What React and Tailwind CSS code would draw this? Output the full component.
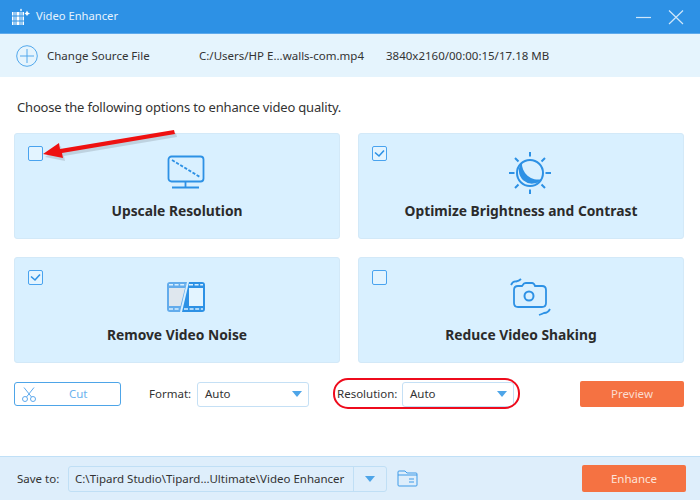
import React from 'react';

function Checkbox({ checked }) {
  return (
    <div className="w-[15px] h-[15px] rounded-[2px] border border-[#49a3ef] bg-[#e3f4ff] flex items-center justify-center">
      {checked && (
        <svg width="11" height="9" viewBox="0 0 11 9" fill="none">
          <path d="M1 3.5 L5 7 L10 1.5" stroke="#2d91e5" strokeWidth="1.6" />
        </svg>
      )}
    </div>
  );
}

function MonitorIcon() {
  return (
    <svg width="38" height="34" viewBox="0 0 38 34" fill="none" stroke="#2d91e5" strokeWidth="1.8">
      <rect x="1.500" y="1.500" width="35" height="25" rx="3" />
      <path d="M5 5 L33 22" strokeDasharray="3.2 1.6" />
      <path d="M18.5 27 V32 M5 32.500 H32" />
    </svg>
  );
}

function SunIcon() {
  return (
    <svg width="44" height="44" viewBox="0 0 44 44" fill="none">
      <circle cx="22" cy="22" r="13" stroke="#2d91e5" strokeWidth="2" fill="#d9f0ff" />
      <path d="M14 11 A13 13 0 1 0 34 28 A16 16 0 0 1 14 11 Z" fill="#2d91e5" />
      <path d="M22 1 V5.5 M22 38.5 V43 M1 22 H6.5 M37.5 22 H43 M7 7 L10.5 10.500 M33.500 33.500 L37 37 M37 7 L33.500 10.500 M10.500 33.500 L7 37" stroke="#2d91e5" strokeWidth="2" />
    </svg>
  );
}

function FilmIcon() {
  return (
    <svg width="40" height="32" viewBox="0 0 40 32" fill="none">
      <path d="M21 1 H4 Q1 1 1 4 V28 Q1 31 4 31 H14 Z" fill="#63acec" />
      <path d="M23 1 H36 Q39 1 39 4 V28 Q39 31 36 31 H16 Z" fill="#2d91e5" />
      <path d="M3 7 H19 L14.500 25 H3 Z" fill="#dfe7ee" />
      <rect x="23" y="7" width="14" height="18" fill="#e3f4ff" />
      <path d="M3 3.800 H20 M3 28 H14" stroke="#d9f0ff" strokeWidth="1.600" strokeDasharray="4 1.600" />
      <path d="M23 3.800 H37 M18 28 H37" stroke="#d9f0ff" strokeWidth="1.600" strokeDasharray="4 1.600" />
    </svg>
  );
}

function ShakeCameraIcon() {
  return (
    <svg width="42" height="38" viewBox="0 0 42 38" fill="none" stroke="#2d91e5" strokeWidth="1.800">
      <path d="M8 8 H12 L14 5.500 Q15 5 16 5 H22 Q24 5 25 8 H32 Q36 8 36 12 V25 Q36 29 32 29 H8 Q4 29 4 25 V12 Q4 8 8 8 Z" />
      <circle cx="19" cy="18" r="4.500" strokeWidth="2" />
      <path d="M1 7 Q3 3 6 3.500 Q9 3 11 1" />
      <path d="M29 37 Q32 36 34 35 Q38 35 40 31" />
    </svg>
  );
}

function OptionCard({ title, checked, iconBox, children }) {
  return (
    <div className="h-[106px] rounded-[3px] border border-[#d3e9f8] bg-[#d9f0ff] flex flex-col">
      <div className="flex">
        <div className="ml-[13px] mt-[12px]">
          <Checkbox checked={checked} />
        </div>
      </div>
      <div className={`w-full flex justify-center ${iconBox}`}>{children}</div>
      <div className="mt-auto mb-[18px] text-center text-[13.8px] leading-[18px] font-bold text-[#2b2b2b]">{title}</div>
    </div>
  );
}

function SelectBox({ value }) {
  return (
    <div className="w-[112px] h-[25px] rounded-[3px] border border-[#c5e0f5] bg-white pl-[7px] pr-[6px] flex items-center justify-between">
      <span className="text-[11.5px] text-[#333333]">{value}</span>
      <svg width="10" height="6" viewBox="0 0 10 6">
        <path d="M0 0 H10 L5 6 Z" fill="#4ea5e8" />
      </svg>
    </div>
  );
}

export default function App() {
  return (
    <div className="relative w-[700px] h-[500px] overflow-hidden bg-white flex flex-col font-['Noto_Sans',sans-serif] text-[#333333]">
      {/* title bar */}
      <div className="h-[34px] shrink-0 bg-[#2d91e5] border-b border-[#5eaaec] flex items-center pl-[11px] pr-[16px]">
        <svg width="19" height="18" viewBox="0 0 19 18" className="mr-[6px]" fill="none">
          <rect x="1" y="4" width="12" height="13" fill="#ffffff" />
          <path d="M3 4 V17 M5 4 V17 M9 4 V17 M11 4 V17 M1 8 H13 M1 13 H13" stroke="#2d91e5" strokeWidth="1" />
          <path d="M10 0.500 L11 2 L10 3.500 L9 2 Z M16 2.500 L17 4.500 L19 5.500 L17 6.500 L16 8 L15 6.500 L13.500 5.500 L15 4.500 Z" fill="#ffffff" />
        </svg>
        <span className="text-[11.2px] text-[#e6f3fd]">Video Enhancer</span>
        <svg width="48" height="16" viewBox="0 0 48 16" className="ml-auto" fill="none" stroke="#cfe7fa" strokeWidth="1.200">
          <path d="M0 8.500 H15" />
          <path d="M33 1.500 L47 15 M47 1.500 L33 15" />
        </svg>
      </div>

      {/* source file bar */}
      <div className="h-[43px] shrink-0 bg-[#e5f4fd] flex items-center pl-[16px] text-[11.5px]">
        <svg width="22" height="22" viewBox="0 0 22 22" fill="none" stroke="#52a8ec" strokeWidth="1">
          <circle cx="11" cy="11" r="10.300" />
          <path d="M11 4 V18 M4 11 H18" />
        </svg>
        <span className="ml-[9px] w-[152px]">Change Source File</span>
        <span className="w-[187px]">C:/Users/HP E...walls-com.mp4</span>
        <span>3840x2160/00:00:15/17.18 MB</span>
      </div>

      {/* options */}
      <div className="flex-1 px-[14px] flex flex-col">
        <p className="mt-[20px] pl-[3px] text-[13px] tracking-[-0.18px] leading-[20px]">Choose the following options to enhance video quality.</p>
        <div className="mt-[16px] grid grid-cols-[326px_326px] gap-x-[18px] gap-y-[18px]">
          <OptionCard title="Upscale Resolution" iconBox="-mt-[6px] pl-[18px]">
            <MonitorIcon />
          </OptionCard>
          <OptionCard title="Optimize Brightness and Contrast" checked iconBox="-mt-[10px] pl-[18px]">
            <SunIcon />
          </OptionCard>
          <OptionCard title="Remove Video Noise" checked iconBox="-mt-[4px] pl-[18px]">
            <FilmIcon />
          </OptionCard>
          <OptionCard title="Reduce Video Shaking" iconBox="-mt-[7px] pl-[20px]">
            <ShakeCameraIcon />
          </OptionCard>
        </div>

        {/* controls row */}
        <div className="mt-[18px] flex items-center text-[11.5px]">
          <div className="w-[107px] h-[24px] rounded-[3px] border border-[#4ea5e8] flex items-center pl-[7px]">
            <svg width="14" height="15" viewBox="0 0 14 15" fill="none" stroke="#5ea9ec" strokeWidth="1">
              <circle cx="3" cy="12" r="2.500" />
              <circle cx="11" cy="12" r="2.500" />
              <path d="M4.500 10 L12 0.500 M9.500 10 L2 0.500" />
            </svg>
            <span className="ml-[33px] text-[#6ab2ee]">Cut</span>
          </div>
          <span className="ml-[28px] w-[42px]">Format:</span>
          <div className="ml-[6px]">
            <SelectBox value="Auto" />
          </div>
          <span className="ml-[28px] w-[59px]">Resolution:</span>
          <div className="ml-[6px]">
            <SelectBox value="Auto" />
          </div>
          <div className="ml-auto mr-[2px] w-[104px] h-[26px] rounded-[2px] bg-[#f57242] text-[#fbdccf] flex items-center justify-center">
            Preview
          </div>
        </div>
      </div>

      {/* save bar */}
      <div className="h-[44px] shrink-0 bg-[#deeefb] border-t border-[#c0e0f7] flex items-center pl-[17px] text-[11.5px]">
        <span className="w-[43px]">Save to:</span>
        <div className="ml-[8px] w-[319px] h-[26px] rounded-[3px] border border-[#c0dff5] flex items-center">
          <span className="flex-1 pl-[6px] whitespace-nowrap overflow-hidden text-[#333333]">C:\Tipard Studio\Tipard...Ultimate\Video Enhancer</span>
          <div className="w-[33px] h-full border-l border-[#c0dff5] flex items-center justify-center">
            <svg width="10" height="6" viewBox="0 0 10 6">
              <path d="M0 0 H10 L5 6 Z" fill="#4ea5e8" />
            </svg>
          </div>
        </div>
        <svg width="21" height="17" viewBox="0 0 21 17" fill="none" stroke="#3f9be8" strokeWidth="1" className="ml-[10px]">
          <path d="M1 15 V2 Q1 1 2 1 H8 L10 3 H19 Q20 3 20 4 V15 Q20 16 19 16 H2 Q1 16 1 15 Z" />
          <path d="M1 5 H20" />
          <path d="M12 9 H17 M12 12 H17" />
        </svg>
        <div className="ml-auto mr-[14px] w-[104px] h-[27px] rounded-[2px] bg-[#f57242] text-[#fde3d8] flex items-center justify-center">
          Enhance
        </div>
      </div>

      {/* annotations drawn over the screenshot */}
      <div className="absolute left-[333px] top-[378px] w-[187px] h-[31px] rounded-[15px] border-2 border-[#ee0b1c]" />
      <svg className="absolute left-[40px] top-[125px]" width="140" height="40" viewBox="0 0 140 40">
        <path d="M3 29 L19 18 L20 24 L134 5 L135 9 L22 28 L23 33 Z" fill="#000000" opacity="0.12" transform="translate(2 3)" />
        <path d="M3 29 L19 18 L20 24 L134 5 L135 9 L22 28 L23 33 Z" fill="#ee1111" />
      </svg>
    </div>
  );
}
